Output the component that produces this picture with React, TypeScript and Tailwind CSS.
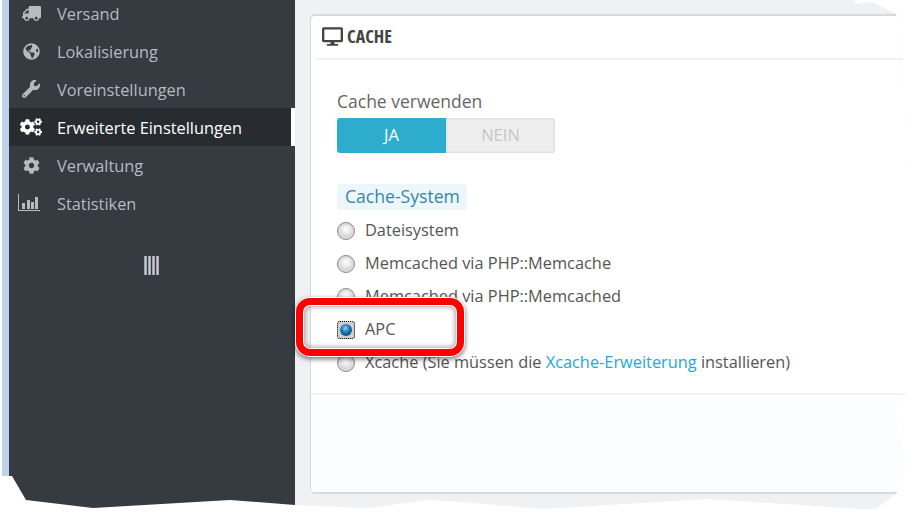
import { FaTruck, FaGlobeAmericas, FaWrench, FaCogs, FaCog, FaDesktop } from "react-icons/fa";
import type { ReactNode } from "react";

type NavItem = {
  label: string;
  icon: ReactNode;
  active?: boolean;
};

const StatsIcon = () => (
  <svg width="22" height="18" viewBox="0 0 22 18" fill="currentColor" className="-ml-[5px]">
    <path d="M0 0h1v16h21v1H0z" />
    <rect x="4" y="9" width="3" height="6" />
    <rect x="9" y="6" width="3" height="9" />
    <rect x="13" y="8" width="3" height="7" />
    <rect x="17" y="3" width="3" height="12" />
  </svg>
);

const CollapseIcon = () => (
  <svg width="17" height="19" viewBox="0 0 17 19" shapeRendering="crispEdges">
    {[0, 4, 8, 12].map((x) => (
      <g key={x}>
        <rect x={x} width="1" height="19" fill="#7fa9cb" />
        <rect x={x + 1} width="1" height="19" fill="#c9ccd0" />
        <rect x={x + 2} width="1" height="19" fill="#c3a08f" />
      </g>
    ))}
  </svg>
);

const navItems: NavItem[] = [
  { label: "Versand", icon: <FaTruck size={19} className="-scale-x-100" /> },
  { label: "Lokalisierung", icon: <FaGlobeAmericas size={17} /> },
  { label: "Voreinstellungen", icon: <FaWrench size={18} className="-scale-x-100 rotate-90" /> },
  { label: "Erweiterte Einstellungen", icon: <FaCogs size={22} />, active: true },
  { label: "Verwaltung", icon: <FaCog size={17} /> },
  { label: "Statistiken", icon: <StatsIcon /> },
];

const Radio = ({ checked }: { checked?: boolean }) =>
  checked ? (
    <span className="flex items-center justify-center w-[18px] h-[18px] outline-1 -outline-offset-1 outline-dotted outline-black rounded-[3px] bg-[#cfcfcf]">
      <span className="w-[12px] h-[12px] rounded-full bg-[radial-gradient(circle_at_45%_35%,#8fd0f5_0%,#1b78b5_40%,#06344f_100%)]" />
    </span>
  ) : (
    <span className="flex items-center justify-center w-[18px] h-[18px] rounded-full border border-[#8a8a8a] bg-[#dcdcdc]">
      <span className="w-[12px] h-[12px] rounded-full bg-[radial-gradient(circle_at_50%_35%,#ffffff_0%,#e2e2e2_60%,#b4b4b4_100%)]" />
    </span>
  );

const Option = ({ children, checked }: { children: ReactNode; checked?: boolean }) => (
  <div className="flex items-center h-[33px] text-[16.35px] text-[#555]">
    <Radio checked={checked} />
    <span className="ml-[10px]">{children}</span>
  </div>
);

const App = () => {
  return (
    <div className="relative w-[919px] h-[513px] bg-white overflow-hidden font-['Open_Sans',sans-serif]">
      <div className="flex w-full h-full [clip-path:polygon(2px_0,854px_0,856px_4px,870px_2px,875px_3px,896px_14px,900px_40px,903px_58px,906px_200px,906px_393px,895px_410px,906px_467px,897px_493px,876px_509px,860px_509px,708px_499px,543px_509px,460px_502px,430px_500px,367px_508px,295px_505px,230px_500px,93px_508px,26px_500px,12px_476px,2px_476px)]">
        <div className="w-[9px] shrink-0 bg-[#bdd3ec]" />

        <nav className="w-[286px] shrink-0 bg-[#363a41] flex flex-col -mt-[6px] pb-[6px] text-[16.35px] text-[#b4bbc1]">
          {navItems.map((item) => (
            <div
              key={item.label}
              className={
                item.active
                  ? "flex items-center h-[38px] shrink-0 pl-[8px] bg-[#282b30] text-white border-r-4 border-white"
                  : "flex items-center h-[38px] shrink-0 pl-[8px]"
              }
            >
              <span className="flex items-center justify-center w-[28px]">{item.icon}</span>
              <span className="ml-[12px] pt-[2px]">{item.label}</span>
            </div>
          ))}
          <div className="flex justify-center pt-[34px]">
            <CollapseIcon />
          </div>
        </nav>

        <main className="flex-1 bg-[#eff1f3] pt-[14px] pl-[15px]">
          <div className="h-[480px] flex flex-col bg-white rounded-l-[5px] border-l border-t-2 border-b-2 border-[#d6dadd]">
            <div className="flex items-center h-[44px] ml-[4px] pb-[2px] border-b-2 border-[#eff1f3] text-[#444]">
              <FaDesktop size={21} className="ml-[7px]" />
              <span className="ml-[4px] text-[18px] font-bold [font-stretch:75%]">CACHE</span>
            </div>

            <div className="pl-[26px] pt-[30px] pb-[14px] bg-white">
              <div className="text-[17.5px] leading-[22px] text-[#666]">Cache verwenden</div>
              <div className="flex w-[218px] h-[35px] mt-[6px] text-[16.5px]">
                <div className="w-[109px] flex items-center justify-center rounded-l-[3px] bg-[#2eacce] text-white">JA</div>
                <div className="flex-1 flex items-center justify-center rounded-r-[3px] bg-[#eeeeee] text-[#c7c7c7] shadow-[inset_0_0_3px_rgba(0,0,0,0.15)]">NEIN</div>
              </div>
              <div className="w-[130px] h-[26px] mt-[31px] px-[8px] rounded-[3px] bg-[#edf7fb] text-[17.6px] leading-[24px] text-[#3586ae] whitespace-nowrap">Cache-System</div>
              <div className="mt-[4px]">
                <Option>Dateisystem</Option>
                <Option>Memcached via PHP::Memcache</Option>
                <Option>Memcached via PHP::Memcached</Option>
                <Option checked>APC</Option>
                <Option>
                  Xcache (Sie müssen die <span className="text-[#1ea7e0]">Xcache-Erweiterung</span> installieren)
                </Option>
              </div>
            </div>

            <div className="flex-1 border-t-2 border-[#eff1f3] bg-[#fcfdfe]" />
          </div>
        </main>
      </div>

      {/* red highlight over the APC row */}
      <div className="absolute left-[296px] top-[298px] w-[168px] h-[58px] rounded-[14px] border-[7px] border-[#ff0000] shadow-[0_0_0_1px_#fff,0_2px_5px_1px_rgba(0,0,0,0.55),inset_0_0_0_1px_#fff,inset_0_0_5px_2px_rgba(0,0,0,0.35)]" />
    </div>
  );
};

export default App;
